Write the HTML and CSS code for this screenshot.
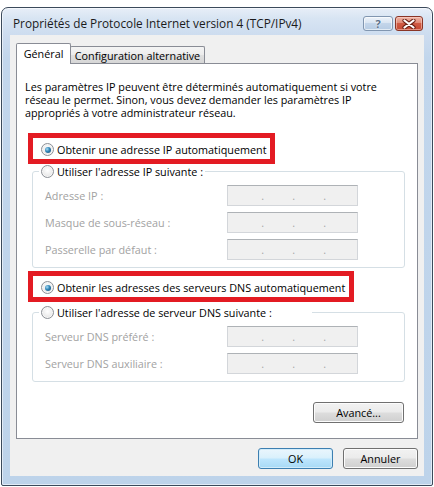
FILE: index.html
```html
<!DOCTYPE html>
<html lang="fr">
<head>
<meta charset="utf-8">
<title>Propriétés de Protocole Internet version 4 (TCP/IPv4)</title>
<link rel="stylesheet" href="styles.css">
</head>
<body>
<div class="window">
  <div class="titlebar">
    <span class="title">Propriétés de Protocole Internet version 4 (TCP/IPv4)</span>
    <div class="caption-buttons">
      <span class="cbtn help">?</span>
      <span class="cbtn close">
        <svg width="14" height="10" viewBox="0 0 14 10">
          <path d="M2.5 1.5 L11.5 8.5 M11.5 1.5 L2.5 8.5" stroke="#6a2114" stroke-width="4.2" stroke-linecap="round" fill="none"/>
          <path d="M2.5 1.5 L11.5 8.5 M11.5 1.5 L2.5 8.5" stroke="#ffffff" stroke-width="2.2" stroke-linecap="round" fill="none"/>
        </svg>
      </span>
    </div>
  </div>
  <div class="client">
    <div class="tabs">
      <div class="tab active">Général</div>
      <div class="tab alt">Configuration alternative</div>
    </div>
    <div class="panel">
      <p class="intro">Les paramètres IP peuvent être déterminés automatiquement si votre<br>réseau le permet. Sinon, vous devez demander les paramètres IP<br>appropriés à votre administrateur réseau.</p>

      <div class="callout callout-ip">
        <label class="opt"><span class="rb on"></span>Obtenir une adresse IP automatiquement</label>
      </div>

      <fieldset class="group group-ip">
        <legend><label class="opt"><span class="rb"></span>Utiliser l'adresse IP suivante :</label></legend>
        <div class="row"><span class="lbl">Adresse IP :</span><span class="ip"><span>.</span><span>.</span><span>.</span></span></div>
        <div class="row"><span class="lbl">Masque de sous-réseau :</span><span class="ip"><span>.</span><span>.</span><span>.</span></span></div>
        <div class="row"><span class="lbl">Passerelle par défaut :</span><span class="ip"><span>.</span><span>.</span><span>.</span></span></div>
      </fieldset>

      <div class="callout callout-dns">
        <label class="opt"><span class="rb on"></span>Obtenir les adresses des serveurs DNS automatiquement</label>
      </div>

      <fieldset class="group group-dns">
        <legend><label class="opt"><span class="rb"></span>Utiliser l'adresse de serveur DNS suivante :</label></legend>
        <div class="row"><span class="lbl">Serveur DNS préféré :</span><span class="ip"><span>.</span><span>.</span><span>.</span></span></div>
        <div class="row"><span class="lbl">Serveur DNS auxiliaire :</span><span class="ip"><span>.</span><span>.</span><span>.</span></span></div>
      </fieldset>

      <button class="btn advanced">Avancé...</button>
    </div>
    <div class="footer">
      <button class="btn default">OK</button>
      <button class="btn">Annuler</button>
    </div>
  </div>
</div>
</body>
</html>
```
FILE: styles.css
```css
* { box-sizing: border-box; }

html, body {
  margin: 0;
  padding: 0;
  background: #ffffff;
}

body {
  width: 434px;
  height: 487px;
  overflow: hidden;
  font-family: "Open Sans", "Noto Sans", sans-serif;
  font-size: 10.8px;
  color: #000;
}

/* ---------- window frame ---------- */
.window {
  margin: 7px 0 0 1px;
  width: 432px;
  height: 479px;
  border: 1px solid #3b4a5b;
  border-radius: 7px 7px 2px 2px;
  background: linear-gradient(180deg, #e7eef8 0px, #d8e5f3 10px, #cddcef 27px, #c2d6ec 50px, #bdd3ea 100%);
  box-shadow: inset 0 0 0 1px rgba(255, 255, 255, 0.55);
  display: flex;
  flex-direction: column;
  padding: 0 8px 9px;
}

.titlebar {
  height: 27px;
  flex: none;
  display: flex;
  align-items: flex-start;
  justify-content: space-between;
  padding-top: 8px;
}

.title {
  padding-left: 3px;
  font-size: 11.8px;
  line-height: 15px;
  color: #1b1b1b;
  white-space: nowrap;
}

.caption-buttons {
  display: flex;
  gap: 2px;
  margin-right: 1px;
}

.cbtn {
  height: 15px;
  border-radius: 3px;
  display: flex;
  align-items: center;
  justify-content: center;
}

.help {
  width: 30px;
  border: 1px solid #8196b0;
  background: linear-gradient(180deg, #eef3fa 0%, #d9e5f2 45%, #c3d5ea 50%, #b6cbe3 100%);
  box-shadow: inset 0 0 0 1px rgba(255, 255, 255, 0.6);
  color: #5c7189;
  font-weight: bold;
  font-size: 11px;
  line-height: 13px;
  text-shadow: 0 0 2px #fff;
}

.close {
  width: 28px;
  border: 1px solid #8a3526;
  background: linear-gradient(180deg, #efb4a6 0%, #e08a76 45%, #cf5a43 50%, #c64a33 100%);
  box-shadow: inset 0 0 0 1px rgba(255, 220, 210, 0.5);
}

/* ---------- client area ---------- */
.client {
  flex: 1;
  background: #f0f0f0;
  display: flex;
  flex-direction: column;
  padding: 8px 6px 7px;
}

.tabs {
  display: flex;
  align-items: flex-end;
  height: 21px;
  margin-bottom: -1px;
  position: relative;
  z-index: 1;
}

.tab {
  height: 17px;
  margin-bottom: 1px;
  border: 1px solid #898c95;
  border-bottom: none;
  border-radius: 2px 2px 0 0;
  background: linear-gradient(180deg, #f4f4f4 0%, #ececec 50%, #e0e0e0 51%, #d6d6d6 100%);
  display: flex;
  align-items: center;
  justify-content: center;
  white-space: nowrap;
  padding-top: 1px;
}

.tab.active {
  width: 55px;
  height: 21px;
  margin-bottom: 0;
  background: #ffffff;
  position: relative;
  z-index: 2;
  padding-bottom: 2px;
}

.tab.alt {
  width: 135px;
  margin-left: -1px;
}

.panel {
  height: 376px;
  flex: none;
  background: #ffffff;
  border: 1px solid #898c95;
  padding: 16px 13px 0 11px;
  display: flex;
  flex-direction: column;
  align-items: flex-start;
}

.intro {
  margin: 0 0 14px -3px;
  line-height: 13px;
  white-space: nowrap;
}

/* red annotation boxes */
.callout {
  height: 31px;
  border: 5px solid #e31b23;
  background: #ffffff;
  display: flex;
  align-items: center;
  padding: 2px 0 0 8px;
}

.callout-ip { width: 247px; }
.callout-dns { width: 326px; margin-top: 3px; }

/* radio options */
.opt {
  display: flex;
  align-items: center;
  gap: 3px;
  line-height: 13px;
  white-space: nowrap;
}

.rb {
  flex: none;
  width: 13px;
  height: 13px;
  border-radius: 50%;
  border: 1px solid #8c9096;
  background: radial-gradient(circle at 50% 40%, #ffffff 0%, #ececec 55%, #d4d4d4 100%);
  box-shadow: inset 0 0 0 1px #f6f6f6;
  display: flex;
  align-items: center;
  justify-content: center;
}

.rb.on::after {
  content: "";
  width: 6px;
  height: 6px;
  border-radius: 50%;
  background: radial-gradient(circle at 35% 35%, #a6dcf6 0%, #3185b6 45%, #154872 100%);
}

/* group boxes */
.group {
  margin: 0 0 0 4px;
  width: 373px;
  border: 1px solid #d5dfe5;
  border-radius: 3px;
  padding: 7px 46px 7px 12px;
  min-inline-size: auto;
}

.group legend {
  height: 14px;
  padding: 0 2px;
  margin-left: -6px;
  display: flex;
  align-items: center;
}

.group-dns { margin-top: 3px; }
.group-dns legend { width: 273px; }

.row {
  display: flex;
  align-items: center;
  justify-content: space-between;
  height: 21px;
}

.row + .row { margin-top: 6px; }

.lbl {
  color: #a2a2a2;
  white-space: nowrap;
}

.ip {
  width: 131px;
  height: 21px;
  background: #f0f0f0;
  border: 1px solid #d3d6da;
  border-top-color: #aeb2b6;
  display: flex;
  padding-left: 5px;
}

.ip span {
  width: 31px;
  text-align: right;
  color: #a8a8a8;
  line-height: 19px;
}

/* push buttons */
.btn {
  height: 21px;
  width: 75px;
  padding: 0;
  border: 1px solid #707070;
  border-radius: 3px;
  background: linear-gradient(180deg, #f2f2f2 0%, #ebebeb 48%, #dddddd 52%, #cfcfcf 100%);
  box-shadow: inset 0 0 0 1px #fcfcfc;
  font: inherit;
  color: #000;
  line-height: 17px;
}

.btn.default {
  border-color: #3c7fb1;
  background: linear-gradient(180deg, #eaf6fd 0%, #d9f0fc 48%, #bee6fd 52%, #a7d9f5 100%);
  box-shadow: inset 0 0 0 1px #d2ecfa;
}

.advanced {
  width: 91px;
  margin-top: 20px;
  align-self: flex-end;
}

.footer {
  display: flex;
  justify-content: flex-end;
  gap: 10px;
  margin-top: 9px;
}
```
